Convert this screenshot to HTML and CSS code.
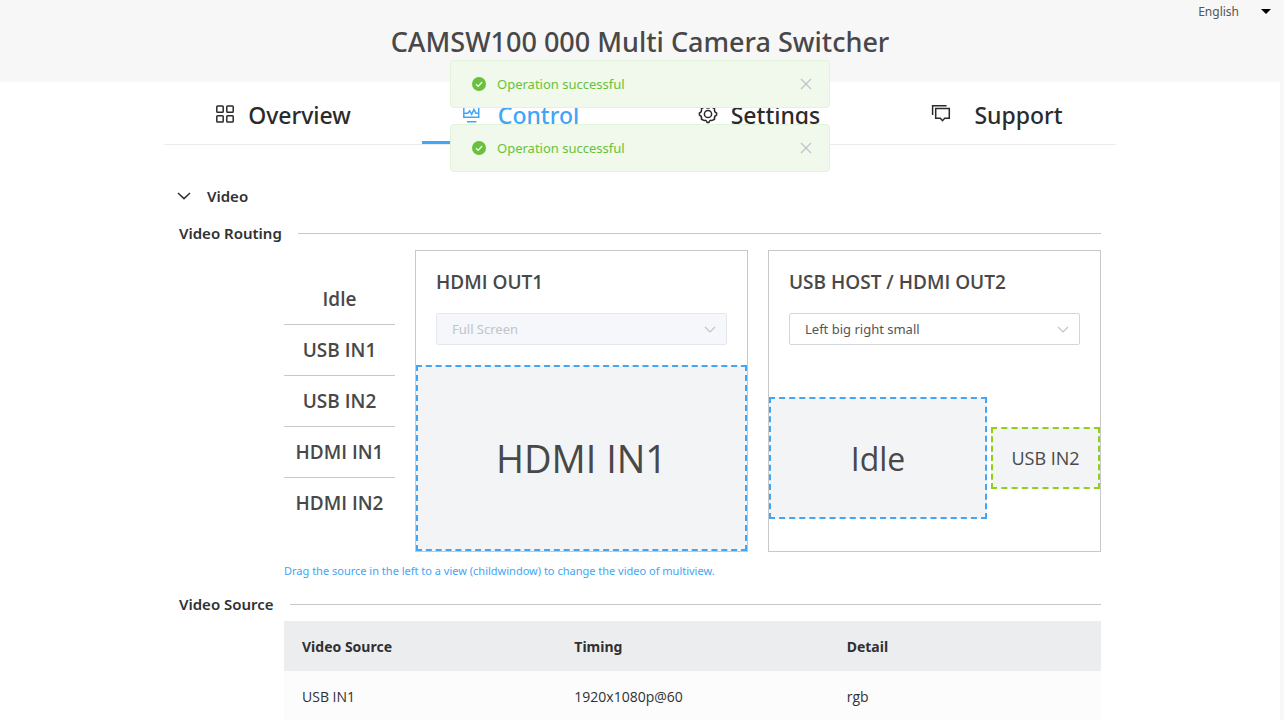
FILE: index.html
```html
<!DOCTYPE html>
<html lang="en">
<head>
<meta charset="utf-8">
<meta name="viewport" content="width=device-width, initial-scale=1">
<title>Multi Camera Switcher</title>
<link rel="stylesheet" href="styles.css">
</head>
<body>
<div class="page">
  <header class="header">
    <button class="language" type="button">English<span class="caret"></span></button>
    <h1 class="title">CAMSW100 000 Multi Camera Switcher</h1>
  </header>

  <div class="toasts" role="status">
    <div class="toast">
      <svg class="toast-icon" viewBox="0 0 14 14"><circle cx="7" cy="7" r="7" fill="#67c23a"/><path d="M4 7.2l2.1 2.1L10.2 5" fill="none" stroke="#fff" stroke-width="1.2"/></svg>
      <span class="toast-text">Operation successful</span>
      <button class="toast-close" type="button" aria-label="Close"><svg viewBox="0 0 12 12" width="12" height="12"><path d="M1 1l10 10M11 1L1 11" stroke="#c0c4cc" stroke-width="1.3"/></svg></button>
    </div>
    <div class="toast">
      <svg class="toast-icon" viewBox="0 0 14 14"><circle cx="7" cy="7" r="7" fill="#67c23a"/><path d="M4 7.2l2.1 2.1L10.2 5" fill="none" stroke="#fff" stroke-width="1.2"/></svg>
      <span class="toast-text">Operation successful</span>
      <button class="toast-close" type="button" aria-label="Close"><svg viewBox="0 0 12 12" width="12" height="12"><path d="M1 1l10 10M11 1L1 11" stroke="#c0c4cc" stroke-width="1.3"/></svg></button>
    </div>
  </div>

  <main class="container">
    <nav class="tabs">
      <a class="tab" href="#overview">
        <svg class="tab-icon" width="20" height="20" viewBox="0 0 20 20"><g><rect x="1.8" y="1" width="6.4" height="6.2" rx=".8"/><rect x="11.8" y="1" width="6.4" height="6.2" rx=".8"/><rect x="1.8" y="10.8" width="6.4" height="6.2" rx=".8"/><rect x="11.8" y="10.8" width="6.4" height="6.2" rx=".8"/></g></svg>
        Overview
      </a>
      <a class="tab active" href="#control">
        <svg class="tab-icon" width="22" height="20" viewBox="0 0 22 20"><path d="M.8 0h14.9v12.2H.8zM.8 8.2h4l1.9-2.4 2 3.6 2.2-5 2 3.8h2.8M4 16.7h9.4"/></svg>
        Control
      </a>
      <a class="tab" href="#settings">
        <svg class="tab-icon" width="20" height="20" viewBox="0 0 20 20"><circle cx="10" cy="9" r="3.6"/><path d="M7.2 1.6Q10 4.2 12.8 1.6L16.6 3.6Q15.8 7 18.6 8v2Q15.8 11 16.6 14.2L13.6 15.6Q11.6 14.6 11 17.4H9Q8.4 14.6 6.4 15.6L3.4 14.2Q4.2 11 1.4 10V8Q4.2 7 3.4 3.6z" stroke-linejoin="round"/></svg>
        Settings
      </a>
      <a class="tab" href="#support">
        <svg class="tab-icon" width="30" height="20" viewBox="0 0 30 20"><path d="M1.6 10V.8h14"/><path d="M4.7 3.5h13.6v9.8h-4.6l-2.2 2.4-2.2-2.4H4.7z"/></svg>
        Support
      </a>
    </nav>

    <section class="section">
      <button class="collapse" type="button" aria-expanded="true"><svg width="14" height="8" viewBox="0 0 14 8"><path d="M1 1l6 5.6L13 1" fill="none" stroke="#303133" stroke-width="1.5"/></svg>Video</button>

      <h2 class="subhead">Video Routing</h2>
      <div class="routing">
        <ul class="sources">
          <li draggable="true">Idle</li>
          <li draggable="true">USB IN1</li>
          <li draggable="true">USB IN2</li>
          <li draggable="true">HDMI IN1</li>
          <li draggable="true">HDMI IN2</li>
        </ul>
        <article class="output">
          <h3 class="output-title"><label for="layout1">HDMI OUT1</label></h3>
          <div class="select disabled">
            <select id="layout1" disabled><option>Full Screen</option></select>
            <svg class="chevron" width="12" height="7" viewBox="0 0 12 7"><path d="M1 1l5 5 5-5"/></svg>
          </div>
          <div class="stage">
            <div class="view view-full">HDMI IN1</div>
          </div>
        </article>
        <article class="output">
          <h3 class="output-title"><label for="layout2">USB HOST / HDMI OUT2</label></h3>
          <div class="select">
            <select id="layout2"><option>Left big right small</option></select>
            <svg class="chevron" width="12" height="7" viewBox="0 0 12 7"><path d="M1 1l5 5 5-5"/></svg>
          </div>
          <div class="stage split">
            <div class="view view-big">Idle</div>
            <div class="view view-small">USB IN2</div>
          </div>
        </article>
      </div>
      <p class="hint">Drag the source in the left to a view (childwindow) to change the video of multiview.</p>

      <h2 class="subhead">Video Source</h2>
      <table class="table">
        <thead><tr><th>Video Source</th><th>Timing</th><th>Detail</th></tr></thead>
        <tbody><tr><td>USB IN1</td><td>1920x1080p@60</td><td>rgb</td></tr></tbody>
      </table>
    </section>
  </main>
</div>
</body>
</html>
```
FILE: styles.css
```css
* { box-sizing: border-box; }

html { scrollbar-width: none; background: #f7f7f7; }

body {
  margin: 0;
  padding-right: 4px;
  font-family: "Noto Sans", "Open Sans", sans-serif;
  font-size: 14px;
  color: #303133;
}

button, select { font: inherit; color: inherit; }

button { padding: 0; border: 0; background: none; cursor: pointer; }

.page { position: relative; min-height: 100vh; background: #fff; }

.header {
  display: flex;
  flex-direction: column;
  height: 82px;
  background: #f7f7f7;
}

.language {
  display: flex;
  align-items: center;
  align-self: flex-end;
  gap: 22px;
  height: 22px;
  padding-right: 9px;
  font-size: 12px;
  color: #555;
}

.caret {
  border: 5px solid transparent;
  border-top-color: #000;
  border-bottom: 0;
}

.title {
  margin: 0;
  font-size: 27px;
  font-weight: 500;
  line-height: 40px;
  text-align: center;
  color: #484848;
}

.toasts {
  position: absolute;
  top: 60px;
  left: 50%;
  z-index: 2;
  display: grid;
  gap: 16px;
  width: 380px;
  transform: translateX(-50%);
}

.toast {
  display: flex;
  align-items: center;
  gap: 11px;
  height: 48px;
  padding: 0 17px 0 21px;
  border: 1px solid #e1f3d8;
  border-radius: 4px;
  background: #f0f9eb;
  color: #67c23a;
  font-size: 13px;
}

.toast-icon { width: 14px; height: 14px; }
.toast-text { flex: 1; }
.toast-close { display: flex; }

.container { width: min(952px, 100%); margin: 0 auto; }

.tabs {
  display: grid;
  grid-template-columns: repeat(4, 1fr);
  height: 63px;
  border-bottom: 1px solid #ebebeb;
}

.tab {
  display: flex;
  align-items: center;
  justify-content: center;
  gap: 13px;
  margin: 0 20px;
  padding-top: 6px;
  border-bottom: 3px solid transparent;
  color: #2b2b2b;
  font-size: 23px;
  font-weight: 500;
  text-decoration: none;
}

.tab.active { border-color: #42a5f5; color: #42a5f5; }

.tab-icon { flex: none; fill: none; stroke: currentColor; stroke-width: 1.5; }

.section { padding: 39px 15px 0; }

.collapse {
  display: flex;
  align-items: center;
  gap: 16px;
  height: 24px;
  margin: 0 0 13px -2px;
  font-size: 15px;
  font-weight: 600;
}

.subhead {
  display: flex;
  align-items: center;
  gap: 16px;
  height: 24px;
  margin: 0;
  font-size: 15px;
  font-weight: 600;
}

.subhead::after { content: ""; flex: 1; height: 1px; background: #c8c8c8; }

.routing {
  display: grid;
  grid-template-columns: 111px 1fr 1fr;
  gap: 20px;
  margin: 5px 0 0 105px;
}

.sources, .output-title, .view, .table td { font-family: "Open Sans", "Noto Sans", sans-serif; }

.sources {
  margin: 24px 0 0;
  padding: 0;
  list-style: none;
  color: #484848;
  font-size: 19px;
  font-weight: 600;
  line-height: 50px;
  text-align: center;
}

.sources li { border-bottom: 1px solid #c8c8c8; cursor: grab; }
.sources li:last-child { border-bottom: 0; }

.output { border: 1px solid #c8c8c8; }

.output-title {
  margin: 20px;
  color: #484848;
  font-size: 19px;
  font-weight: 600;
  line-height: 22px;
}

.select { position: relative; margin: 0 20px 20px; }

.select select {
  display: block;
  width: 100%;
  height: 32px;
  padding: 0 15px;
  border: 1px solid #d4d6da;
  border-radius: 2px;
  background: #fff;
  color: #555;
  font-size: 13px;
  appearance: none;
}

.select.disabled select {
  border-color: #e4e7ed;
  background: #f5f7fa;
  color: #c0c4cc;
  opacity: 1;
}

.chevron {
  position: absolute;
  top: 13px;
  right: 11px;
  fill: none;
  stroke: #c0c4cc;
  stroke-width: 1.2;
  pointer-events: none;
}

.stage { display: grid; align-items: center; aspect-ratio: 16 / 9; }
.stage.split { grid-template-columns: 2fr 1fr; gap: 4px; }

.view {
  display: flex;
  align-items: center;
  justify-content: center;
  aspect-ratio: 16 / 9;
  border: 2px dashed #42a5f5;
  background: #f3f4f6;
  color: #484848;
  font-variant-ligatures: none;
  white-space: nowrap;
}

.view-full { font-size: 38px; }
.view-big { font-size: 32px; }
.view-small { border-color: #91d018; font-size: 18px; }

.hint {
  margin: 8px 0 10px 105px;
  color: #42a5f5;
  font-size: 11px;
  line-height: 22px;
}

.table {
  width: calc(100% - 105px);
  margin: 5px 0 0 105px;
  border-collapse: collapse;
  table-layout: fixed;
  text-align: left;
}

.table th, .table td { height: 50px; padding: 0 18px; }
.table th { background: #ecedef; font-weight: 700; }
.table td { background: #fcfcfc; }
```
